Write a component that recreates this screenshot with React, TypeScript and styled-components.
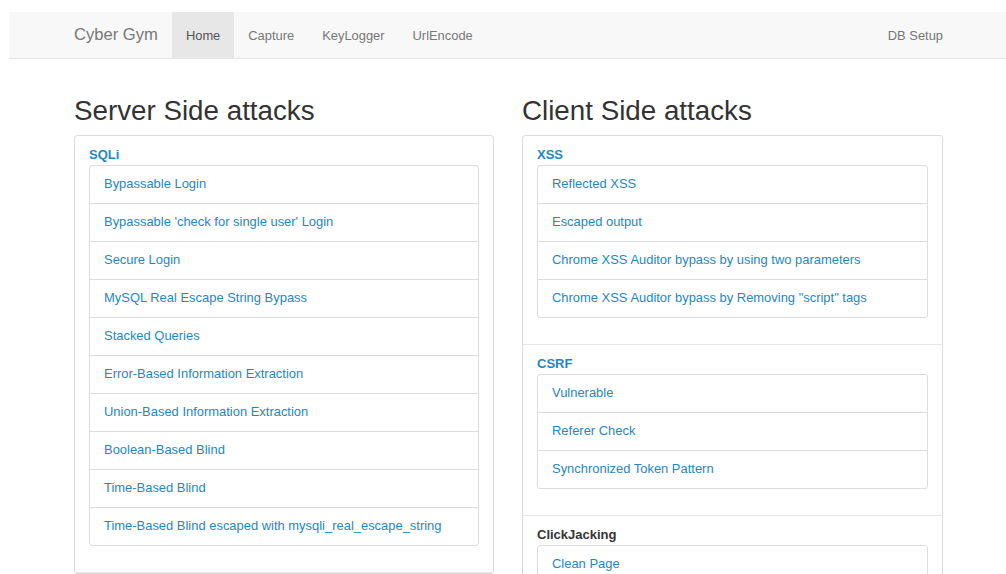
import styled, { createGlobalStyle } from "styled-components";

const GlobalStyle = createGlobalStyle`
  html, body {
    margin: 0;
    padding: 0;
    overflow: hidden;
    background: #fff;
  }
  body {
    font-family: "Liberation Sans", Arial, Helvetica, sans-serif;
    font-size: 13px;
    color: #333;
  }
  * {
    box-sizing: border-box;
  }
`;

const Page = styled.div`
  padding-top: 12px;
  margin-left: 9px;
`;

const Navbar = styled.nav`
  height: 47px;
  background-color: #f8f8f8;
  border-bottom: 1px solid #e7e7e7;
`;

const NavInner = styled.div`
  width: 869px;
  margin-left: 65px;
  height: 46px;
  display: flex;
  align-items: stretch;
`;

const Brand = styled.a`
  display: flex;
  align-items: center;
  padding: 0 14px;
  margin-left: -14px;
  font-size: 16.6px;
  color: #777;
  text-decoration: none;
`;

const NavList = styled.ul<{ $right?: boolean }>`
  display: flex;
  list-style: none;
  margin: 0;
  margin-left: ${(p) => (p.$right ? "auto" : "0")};
  margin-right: ${(p) => (p.$right ? "-14px" : "0")};
  padding: 0;
`;

const NavLink = styled.a<{ $active?: boolean }>`
  display: flex;
  align-items: center;
  height: 100%;
  padding: 0 14px;
  font-size: 12.9px;
  text-decoration: none;
  color: ${(p) => (p.$active ? "#555" : "#777")};
  background-color: ${(p) => (p.$active ? "#e7e7e7" : "transparent")};
`;

const Container = styled.main`
  width: 869px;
  margin: 18.5px 0 0 65px;
  display: grid;
  grid-template-columns: 420px 421px;
  column-gap: 28px;
  align-items: start;
`;

const Column = styled.section``;

const Title = styled.h2`
  font-size: 27.75px;
  font-weight: 500;
  line-height: 30.5px;
  margin: 18.5px 0 8px;
  color: #333;
`;

const Panel = styled.div`
  border: 1px solid #ddd;
  border-radius: 3px;
  background: #fff;
`;

// each attack family sits in its own band, split by a thin rule
const Group = styled.div`
  padding: 9px 14px 26px;
  border-bottom: 1px solid #e6e6e6;
`;

const GroupTitle = styled.div<{ $link?: boolean }>`
  font-size: 13px;
  font-weight: bold;
  line-height: 20px;
  color: ${(p) => (p.$link ? "#1f87c4" : "#333")};
`;

const List = styled.ul`
  list-style: none;
  margin: 0;
  padding: 0;
`;

const Item = styled.li`
  padding: 9.5px 14px;
  line-height: 18px;
  border: 1px solid #ddd;
  margin-bottom: -1px;
  background: #fff;

  &:first-child {
    border-top-left-radius: 3px;
    border-top-right-radius: 3px;
  }
  &:last-child {
    margin-bottom: 0;
    border-bottom-left-radius: 3px;
    border-bottom-right-radius: 3px;
  }
`;

const ItemLink = styled.a`
  color: #1f87c4;
  text-decoration: none;
  font-size: 12.95px;
`;

type Section = { title: string; link: boolean; items: string[] };

const server: Section[] = [
  {
    title: "SQLi",
    link: true,
    items: [
      "Bypassable Login",
      "Bypassable 'check for single user' Login",
      "Secure Login",
      "MySQL Real Escape String Bypass",
      "Stacked Queries",
      "Error-Based Information Extraction",
      "Union-Based Information Extraction",
      "Boolean-Based Blind",
      "Time-Based Blind",
      "Time-Based Blind escaped with mysqli_real_escape_string",
    ],
  },
];

const client: Section[] = [
  {
    title: "XSS",
    link: true,
    items: [
      "Reflected XSS",
      "Escaped output",
      "Chrome XSS Auditor bypass by using two parameters",
      'Chrome XSS Auditor bypass by Removing "script" tags',
    ],
  },
  {
    title: "CSRF",
    link: true,
    items: ["Vulnerable", "Referer Check", "Synchronized Token Pattern"],
  },
  {
    title: "ClickJacking",
    link: false,
    items: ["Clean Page"],
  },
];

const Sections = ({ data }: { data: Section[] }) => (
  <Panel>
    {data.map((s) => (
      <Group key={s.title}>
        <GroupTitle $link={s.link}>{s.title}</GroupTitle>
        <List>
          {s.items.map((it) => (
            <Item key={it}>
              <ItemLink href="#">{it}</ItemLink>
            </Item>
          ))}
        </List>
      </Group>
    ))}
  </Panel>
);

const App = () => {
  return (
    <Page>
      <GlobalStyle />
      <Navbar>
        <NavInner>
          <Brand href="#">Cyber Gym</Brand>
          <NavList>
            <li>
              <NavLink $active href="#">
                Home
              </NavLink>
            </li>
            <li>
              <NavLink href="#">Capture</NavLink>
            </li>
            <li>
              <NavLink href="#">KeyLogger</NavLink>
            </li>
            <li>
              <NavLink href="#">UrlEncode</NavLink>
            </li>
          </NavList>
          <NavList $right>
            <li>
              <NavLink href="#">DB Setup</NavLink>
            </li>
          </NavList>
        </NavInner>
      </Navbar>
      <Container>
        <Column>
          <Title>Server Side attacks</Title>
          <Sections data={server} />
        </Column>
        <Column>
          <Title>Client Side attacks</Title>
          <Sections data={client} />
        </Column>
      </Container>
    </Page>
  );
};

export default App;
